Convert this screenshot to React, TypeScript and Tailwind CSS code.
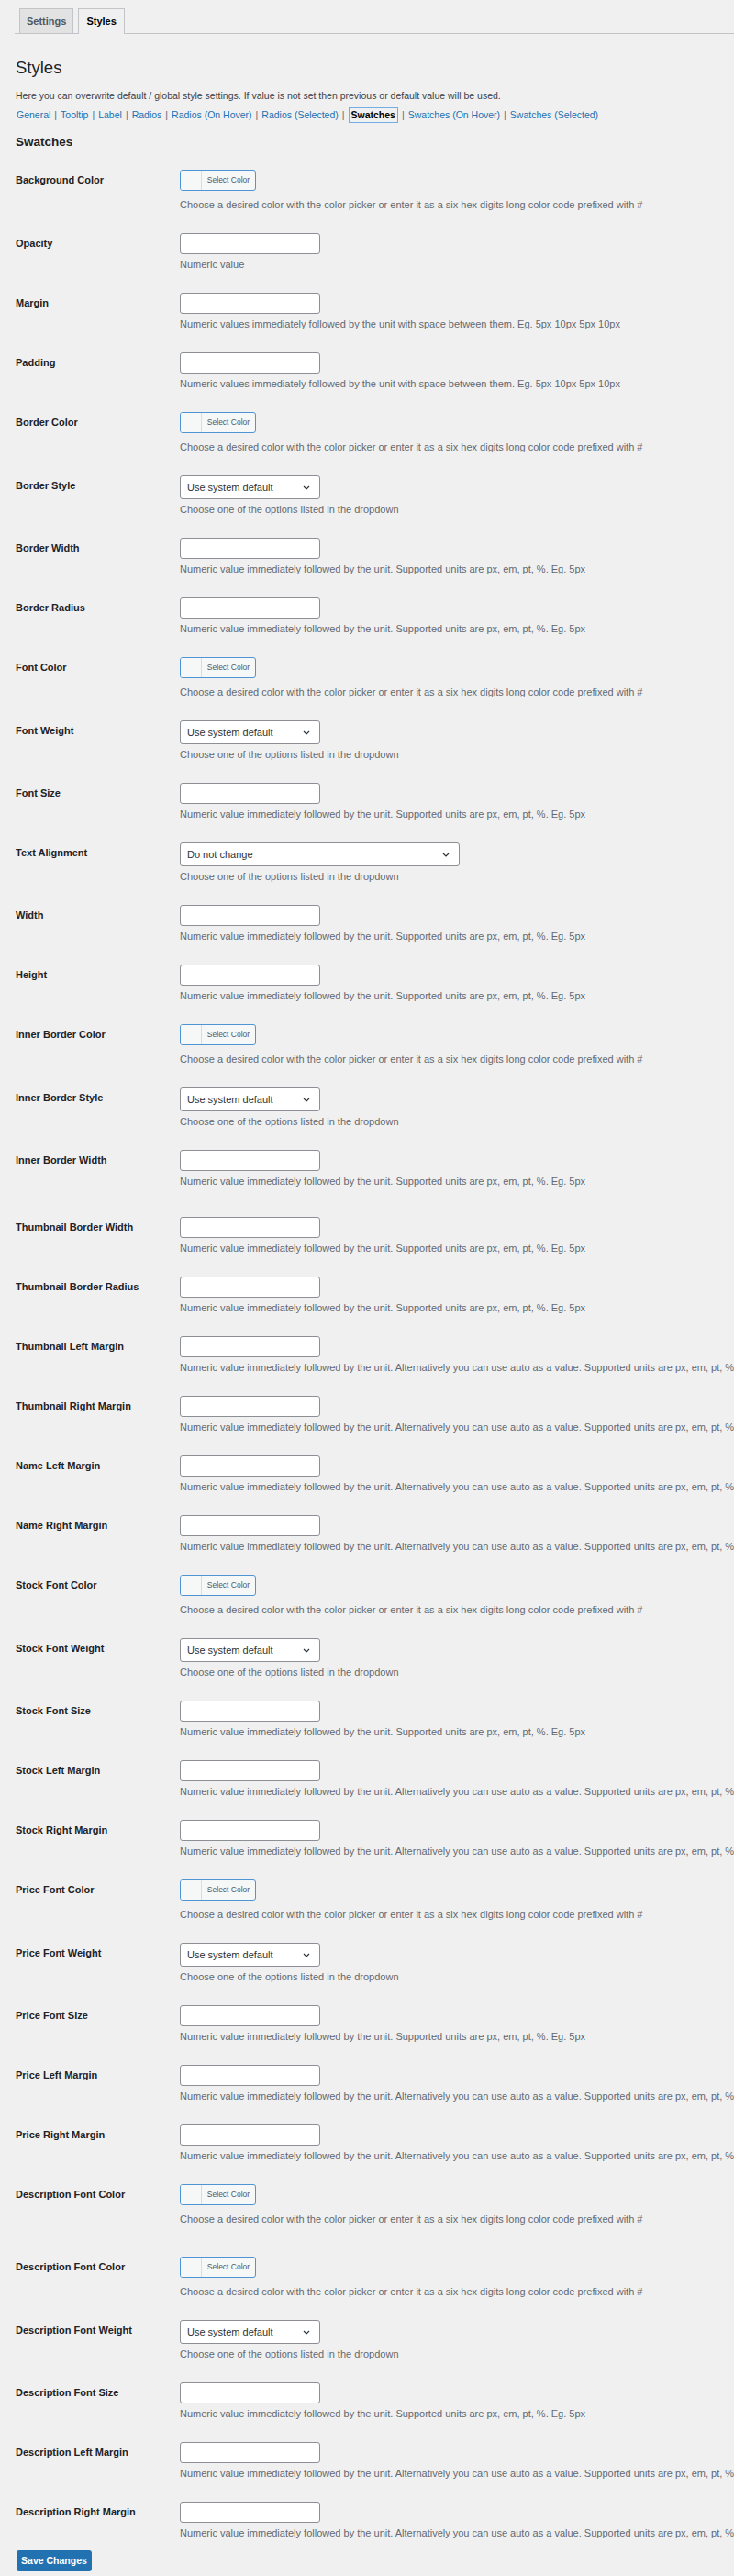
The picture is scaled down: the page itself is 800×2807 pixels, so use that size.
import React from "react";

type Kind = "color" | "text" | "select" | "wide";
type Row = { label: string; kind: Kind; desc: string; extra?: string };

const D_COLOR = "Choose a desired color with the color picker or enter it as a six hex digits long color code prefixed with #";
const D_NUM = "Numeric value";
const D_VALS = "Numeric values immediately followed by the unit with space between them. Eg. 5px 10px 5px 10px";
const D_SEL = "Choose one of the options listed in the dropdown";
const D_UNIT = "Numeric value immediately followed by the unit. Supported units are px, em, pt, %. Eg. 5px";
const D_AUTO = "Numeric value immediately followed by the unit. Alternatively you can use auto as a value. Supported units are px, em, pt, %. Eg. 5px";

const rows: Row[] = [
  { label: "Background Color", kind: "color", desc: D_COLOR },
  { label: "Opacity", kind: "text", desc: D_NUM },
  { label: "Margin", kind: "text", desc: D_VALS },
  { label: "Padding", kind: "text", desc: D_VALS },
  { label: "Border Color", kind: "color", desc: D_COLOR },
  { label: "Border Style", kind: "select", desc: D_SEL },
  { label: "Border Width", kind: "text", desc: D_UNIT },
  { label: "Border Radius", kind: "text", desc: D_UNIT },
  { label: "Font Color", kind: "color", desc: D_COLOR },
  { label: "Font Weight", kind: "select", desc: D_SEL },
  { label: "Font Size", kind: "text", desc: D_UNIT },
  { label: "Text Alignment", kind: "wide", desc: D_SEL },
  { label: "Width", kind: "text", desc: D_UNIT },
  { label: "Height", kind: "text", desc: D_UNIT },
  { label: "Inner Border Color", kind: "color", desc: D_COLOR },
  { label: "Inner Border Style", kind: "select", desc: D_SEL },
  { label: "Inner Border Width", kind: "text", desc: D_UNIT, extra: "pb-[20px]" },
  { label: "Thumbnail Border Width", kind: "text", desc: D_UNIT },
  { label: "Thumbnail Border Radius", kind: "text", desc: D_UNIT },
  { label: "Thumbnail Left Margin", kind: "text", desc: D_AUTO },
  { label: "Thumbnail Right Margin", kind: "text", desc: D_AUTO },
  { label: "Name Left Margin", kind: "text", desc: D_AUTO },
  { label: "Name Right Margin", kind: "text", desc: D_AUTO },
  { label: "Stock Font Color", kind: "color", desc: D_COLOR },
  { label: "Stock Font Weight", kind: "select", desc: D_SEL },
  { label: "Stock Font Size", kind: "text", desc: D_UNIT },
  { label: "Stock Left Margin", kind: "text", desc: D_AUTO },
  { label: "Stock Right Margin", kind: "text", desc: D_AUTO },
  { label: "Price Font Color", kind: "color", desc: D_COLOR },
  { label: "Price Font Weight", kind: "select", desc: D_SEL },
  { label: "Price Font Size", kind: "text", desc: D_UNIT },
  { label: "Price Left Margin", kind: "text", desc: D_AUTO },
  { label: "Price Right Margin", kind: "text", desc: D_AUTO },
  { label: "Description Font Color", kind: "color", desc: D_COLOR, extra: "pb-[22px]" },
  { label: "Description Font Color", kind: "color", desc: D_COLOR },
  { label: "Description Font Weight", kind: "select", desc: D_SEL },
  { label: "Description Font Size", kind: "text", desc: D_UNIT },
  { label: "Description Left Margin", kind: "text", desc: D_AUTO },
  { label: "Description Right Margin", kind: "text", desc: D_AUTO },
];

function Chevron() {
  return (
    <svg width="8" height="5" viewBox="0 0 8 5" className="shrink-0">
      <polyline points="1,1 4,4 7,1" fill="none" stroke="#2c3338" strokeWidth="1.2" />
    </svg>
  );
}

function Control({ kind }: { kind: Kind }) {
  if (kind === "color") {
    return (
      <div className="flex h-[23px] w-[83px] overflow-hidden rounded-[3px] border border-[#4f94d4] bg-[#f6f7f7]">
        <div className="h-full w-[23px] border-r border-[#dcdcde] bg-[#f6f7f7]" />
        <div className="flex flex-1 items-center justify-center text-[8.5px] text-[#50575e]">Select Color</div>
      </div>
    );
  }
  if (kind === "select" || kind === "wide") {
    return (
      <div
        className={
          "flex h-[26px] items-center justify-between rounded-[3px] border border-[#8c8f94] bg-white pl-[7px] pr-[10px] text-[11px] text-[#2c3338] " +
          (kind === "wide" ? "w-[305px]" : "w-[153px]")
        }
      >
        <span>{kind === "wide" ? "Do not change" : "Use system default"}</span>
        <Chevron />
      </div>
    );
  }
  return <div className="h-[23px] w-[153px] rounded-[3px] border border-[#8c8f94] bg-white" />;
}

function FieldRow({ row }: { row: Row }) {
  const gap = row.kind === "color" ? "mt-[9px]" : "mt-[5px]";
  return (
    <div className={"flex pt-[12px] " + (row.extra ?? "pb-[12px]")}>
      <div className="w-[179px] shrink-0 text-[11px] font-bold leading-[23px] text-[#1d2327]">{row.label}</div>
      <div className="flex min-w-0 flex-col">
        <Control kind={row.kind} />
        <div className={gap + " whitespace-nowrap text-[11px] leading-[13px] text-[#646970]"}>{row.desc}</div>
      </div>
    </div>
  );
}

const links = [
  "General",
  "Tooltip",
  "Label",
  "Radios",
  "Radios (On Hover)",
  "Radios (Selected)",
  "Swatches",
  "Swatches (On Hover)",
  "Swatches (Selected)",
];

export default function App() {
  return (
    <div className="min-h-[2807px] w-[800px] overflow-hidden bg-[#f0f0f1] font-['Liberation_Sans',Arial,sans-serif]">
      {/* tabs */}
      <div className="ml-[16px] flex gap-[5px] border-b border-[#c3c4c7] pl-[5px] pt-[9px]">
        <div className="h-[27px] border border-b-0 border-[#c3c4c7] bg-[#e2e2e3] px-[7px] text-[11px] font-bold leading-[26px] text-[#50575e]">
          Settings
        </div>
        <div className="-mb-px h-[28px] border border-b-0 border-[#c3c4c7] bg-[#f0f0f1] px-[8px] text-[11px] font-bold leading-[26px] text-[#000]">
          Styles
        </div>
      </div>

      <div className="pl-[17px]">
        <h1 className="mt-[25px] text-[18.5px] leading-[23px] text-[#1d2327]">Styles</h1>
        <p className="mt-[12px] text-[10.5px] leading-[14px] text-[#3c434a]">
          Here you can overwrite default / global style settings. If value is not set then previous or default value will be used.
        </p>
        <div className="mt-[6px] flex h-[17px] items-center pl-[1px] text-[10.5px] text-[#2271b1]">
          {links.map((l, i) => (
            <React.Fragment key={l + i}>
              {i > 0 && <span className="px-[4px] text-[#646970]">|</span>}
              {l === "Swatches" ? (
                <span className="border border-[#72aee6] px-[2px] font-bold leading-[15px] text-[#000]">{l}</span>
              ) : (
                <span>{l}</span>
              )}
            </React.Fragment>
          ))}
        </div>
        <h2 className="mt-[12px] text-[13.5px] font-bold leading-[18px] text-[#1d2327]">Swatches</h2>

        <div className="mt-[9px]">
          {rows.map((r, i) => (
            <FieldRow key={i} row={r} />
          ))}
        </div>

        <div className="pl-[1px]">
          <div className="flex h-[23px] w-[82px] items-center justify-center rounded-[3px] bg-[#2271b1] text-[10.5px] font-semibold text-white">
            Save Changes
          </div>
        </div>
      </div>
    </div>
  );
}
